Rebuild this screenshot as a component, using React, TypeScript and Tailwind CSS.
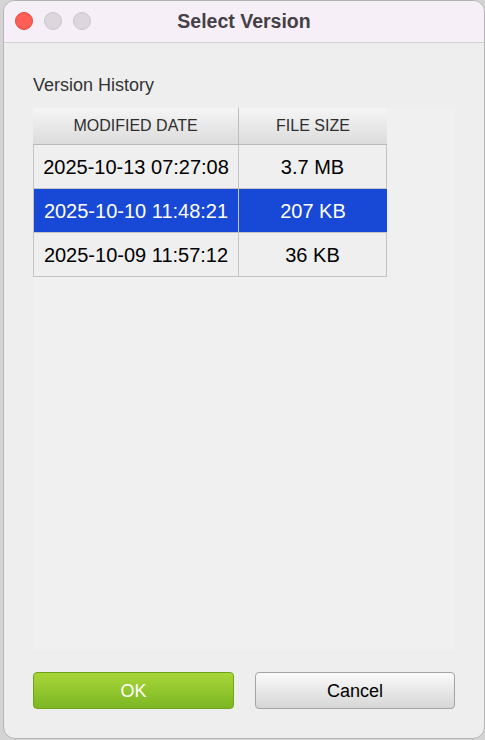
import React from "react";

const rows = [
  { date: "2025-10-13 07:27:08", size: "3.7 MB", selected: false },
  { date: "2025-10-10 11:48:21", size: "207 KB", selected: true },
  { date: "2025-10-09 11:57:12", size: "36 KB", selected: false },
];

export default function App() {
  return (
    <div
      className="w-[485px] h-[740px] bg-[#d4d4d4] pl-[3px] overflow-hidden"
      style={{ fontFamily: '"Liberation Sans", Arial, sans-serif' }}
    >
      <div className="w-[482px] h-[739px] rounded-[12px] border border-[#b4b4b4] bg-[#eeeeee] overflow-hidden flex flex-col">
        {/* Title bar */}
        <div className="relative h-[42px] shrink-0 bg-[#f7eff7] border-b border-[#d6d2d6] flex items-center justify-center">
          <div className="absolute left-[11px] top-[11px] flex gap-[11px]">
            <span className="w-[18px] h-[18px] rounded-full bg-[#fe5f57] border border-[#e5483f]" />
            <span className="w-[18px] h-[18px] rounded-full bg-[#dcd7dc] border border-[#cac5ca]" />
            <span className="w-[18px] h-[18px] rounded-full bg-[#dcd7dc] border border-[#cac5ca]" />
          </div>
          <span className="text-[19.5px] font-bold text-[#454045] leading-none">Select Version</span>
        </div>

        {/* Body */}
        <div className="flex-1 flex flex-col pl-[29px] pr-[28px]">
          <div className="mt-[32px] h-[20px] leading-[20px] text-[18px] text-[#333333]">Version History</div>
          <div className="mt-[13px] w-[422px] h-[542px] bg-[#f0f0f0]">
            <div className="w-[354px]">
              <div className="flex h-[37px] bg-gradient-to-b from-[#f5f5f5] to-[#dcdcdc] border-b border-[#b8b8b8]">
                <div className="w-[206px] border-r border-[#bcbcbc] flex items-center justify-center text-[16px] text-[#2e2e2e]">
                  MODIFIED DATE
                </div>
                <div className="flex-1 flex items-center justify-center text-[16px] text-[#2e2e2e]">FILE SIZE</div>
              </div>
              {rows.map((r) => (
                <div
                  key={r.date}
                  className={
                    r.selected
                      ? "flex h-[44px] bg-[#1848d6] text-white border-b border-[#c4c4c4] border-l border-l-[#c4c4c4]"
                      : "flex h-[44px] bg-[#efefef] text-black border-b border-[#c4c4c4] border-l border-l-[#c4c4c4] border-r border-r-[#c4c4c4]"
                  }
                >
                  <div className="w-[205px] border-r border-[#c4c4c4] flex items-center justify-center text-[20px]">
                    {r.date}
                  </div>
                  <div className="flex-1 flex items-center justify-center text-[20px]">{r.size}</div>
                </div>
              ))}
            </div>
          </div>
          <div className="mt-[22px] flex gap-[21px]">
            <button className="w-[201px] h-[37px] rounded-[4px] border border-[#6fa31c] bg-gradient-to-b from-[#a8d637] to-[#7cb724] text-white text-[18px] leading-none">
              OK
            </button>
            <button className="w-[200px] h-[37px] rounded-[4px] border border-[#a4a4a4] bg-gradient-to-b from-[#fbfbfb] to-[#d6d6d6] text-black text-[18px] leading-none">
              Cancel
            </button>
          </div>
        </div>
      </div>
    </div>
  );
}
